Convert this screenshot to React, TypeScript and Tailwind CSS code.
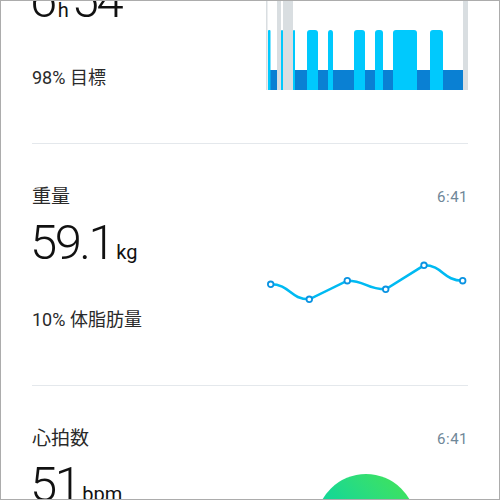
import React from "react";

const sans = { fontFamily: '"Roboto", "Noto Sans CJK JP", sans-serif' };
const thin = { fontFamily: '"Roboto", sans-serif' };

function SleepChart() {
  const cyan = [
    [2, 2.5], [15, 2], [27, 2], [41, 11], [62, 5], [88, 11], [109, 8], [127, 24], [164, 13],
  ];
  const gray = [
    [0, 1.5], [11, 4], [17, 10], [197, 5],
  ];
  return (
    <svg width="202" height="100" viewBox="0 0 202 100">
      <rect x="2" y="80" width="195" height="20" fill="#0a80d3" />
      {gray.map(([x, w]) => (
        <rect key={x} x={x} y="0" width={w} height="100" fill="#d9dee1" />
      ))}
      {cyan.map(([x, w]) => (
        <rect key={x} x={x} y="40" width={w} height="64" rx={w > 4 ? 3 : 1} fill="#00c9fd" />
      ))}
      <rect x="0" y="100" width="202" height="4" fill="#fff" />
    </svg>
  );
}

function WeightChart() {
  const pts = [
    [4.7, 29.3], [43.3, 44.3], [81.3, 25.7], [119.7, 34.3], [158, 10.3], [196.7, 25.7],
  ];
  return (
    <svg width="202" height="60" viewBox="0 0 202 60">
      <path
        d="M4.7 29.3 C24 29.3 24 44.3 43.3 44.3 L81.3 25.7 C100 25.7 100 34.3 119.7 34.3 L158 10.3 C177 10.3 177 25.7 196.7 25.7"
        fill="none"
        stroke="#00baf2"
        strokeWidth="2.6"
      />
      {pts.map(([x, y]) => (
        <circle key={x} cx={x} cy={y} r="2.8" fill="#fff" stroke="#0a93e2" strokeWidth="1.8" />
      ))}
    </svg>
  );
}

function Big({ children }: { children: React.ReactNode }) {
  return (
    <span className="text-[49px] leading-[56px] font-light tracking-[-2.5px]" style={thin}>
      {children}
    </span>
  );
}

function Unit({ children }: { children: React.ReactNode }) {
  return (
    <span className="mx-[3px] text-[20px] text-[#111]" style={sans}>
      {children}
    </span>
  );
}

function Section({
  label,
  value,
  sub,
  chart,
  chartTop,
}: {
  label: string;
  value: React.ReactNode;
  sub: string;
  chart: React.ReactNode;
  chartTop: string;
}) {
  return (
    <div className="h-[242px] border-t border-[#e4e8ec] pt-[41px] flex justify-between">
      <div className="flex flex-col">
        <div className="text-[19px] leading-6 text-[#2a2a2a]" style={sans}>
          {label}
        </div>
        <div className="mt-[6px] -ml-[2px] flex items-baseline text-[#111]">{value}</div>
        <div className="mt-[37px] text-[18px] leading-6 text-[#2a2a2a]" style={sans}>
          {sub}
        </div>
      </div>
      <div className="flex flex-col items-end">
        <div className="text-[15px] leading-6 text-[#6f8798] tracking-[0.5px]" style={sans}>
          6:41
        </div>
        <div className={chartTop}>{chart}</div>
      </div>
    </div>
  );
}

export default function App() {
  return (
    <div className="w-[500px] h-[500px] overflow-hidden border border-[#acacac] bg-white">
      <div className="-mt-[100px] px-[31px]">
        <Section
          label="睡眠"
          value={
            <>
              <Big>6</Big>
              <Unit>h</Unit>
              <Big>54</Big>
            </>
          }
          sub="98% 目標"
          chart={<SleepChart />}
          chartTop="mt-[23px]"
        />
        <Section
          label="重量"
          value={
            <>
              <Big>59.1</Big>
              <Unit>kg</Unit>
            </>
          }
          sub="10% 体脂肪量"
          chart={<WeightChart />}
          chartTop="mt-[46px]"
        />
        <Section
          label="心拍数"
          value={
            <>
              <Big>51</Big>
              <Unit>bpm</Unit>
            </>
          }
          sub=""
          chart={
            <div className="mr-[52px] w-[100px] h-[100px] rounded-full bg-linear-to-tr from-[#00c9c0] via-[#1ad98e] to-[#45e44a]" />
          }
          chartTop="mt-[23px]"
        />
      </div>
    </div>
  );
}
